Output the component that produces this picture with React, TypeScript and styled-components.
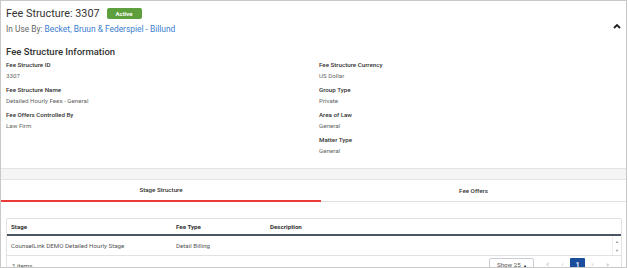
import React from 'react'
import styled, {createGlobalStyle} from 'styled-components'

const GlobalStyle = createGlobalStyle`
  html, body {
    margin: 0;
    padding: 0;
    background: #fff;
    font-family: Roboto, 'Liberation Sans', sans-serif;
    color: #333;
  }
`

const Panel = styled.div`
  box-sizing: border-box;
  width: 627px;
  height: 268px;
  border: 1px solid #c8c8c8;
  overflow: hidden;
`

const Header = styled.div`
  padding: 5px 5px 0 5px;
`

const TitleRow = styled.div`
  display: flex;
  align-items: center;
  gap: 7px;
  height: 15px;
`

const Title = styled.h1`
  margin: 0;
  font-size: 10.8px;
  font-weight: 400;
  color: #333;
`

const Badge = styled.span`
  display: inline-flex;
  align-items: center;
  justify-content: center;
  width: 35px;
  height: 11px;
  border-radius: 2px;
  background: #5c9f3c;
  color: #fff;
  font-size: 6px;
  font-weight: 700;
`

const InUseRow = styled.div`
  display: flex;
  align-items: center;
  justify-content: space-between;
  height: 15px;
  font-size: 8.4px;
  color: #666;
`

const Link = styled.a`
  color: #3b7dd0;
  text-decoration: none;
`

const Chevron = styled.svg`
  width: 8px;
  height: 6px;
  margin-right: 0;
  margin-top: -5px;
`

const SectionTitle = styled.h2`
  margin: 9px 0 0 0;
  font-size: 9.5px;
  font-weight: 500;
  color: #333;
  line-height: 14px;
`

const InfoGrid = styled.div`
  display: grid;
  grid-template-columns: 313px 1fr;
  margin-top: 1px;
  height: 108px;
`

const InfoColumn = styled.div`
  display: flex;
  flex-direction: column;
`

const Field = styled.div`
  display: flex;
  flex-direction: column;
  height: 25px;
`

const Label = styled.div`
  font-size: 6.2px;
  font-weight: 500;
  color: #333;
  line-height: 11px;
`

const Value = styled.div`
  font-size: 6.2px;
  color: #666;
  line-height: 11px;
`

const Band = styled.div`
  height: 10px;
  background: #f4f4f4;
  border-top: 1px solid #e4e4e4;
  border-bottom: 1px solid #e4e4e4;
`

const Tabs = styled.div`
  display: grid;
  grid-template-columns: 320px 1fr;
  height: 22px;
`

const Tab = styled.div<{$active?: boolean}>`
  display: flex;
  align-items: center;
  justify-content: center;
  font-size: 6.2px;
  font-weight: 500;
  color: #333;
  box-sizing: border-box;
  padding-top: ${p => (p.$active ? '0' : '1px')};
  border-bottom: ${p => (p.$active ? '2px solid #ec3a35' : '1px solid #dfe3e8')};
`

const TableWrap = styled.div`
  padding: 16px 4px 0 5px;
`

const Table = styled.div`
  border: 1px solid #e2e2e2;
  border-radius: 2px;
`

const Row = styled.div`
  display: grid;
  grid-template-columns: 165px 94px 1fr 9px;
  align-items: center;
`

const HeadRow = styled(Row)`
  height: 15px;
  border-bottom: 2px solid #4a5462;
`

const BodyRow = styled(Row)`
  height: 19px;
  border-bottom: 1px solid #e2e2e2;
`

const HeadCell = styled.div`
  padding-left: 4px;
  font-size: 6.2px;
  font-weight: 700;
  color: #333;
`

const Cell = styled.div`
  padding-left: 4px;
  font-size: 6.2px;
  color: #555;
`

const ScrollBar = styled.div`
  align-self: stretch;
  display: flex;
  flex-direction: column;
  justify-content: space-between;
  align-items: center;
  padding: 3px 0 2px;
  font-size: 4px;
  color: #999;
  border-left: 1px solid #eee;
`

const Footer = styled.div`
  display: flex;
  align-items: flex-start;
  height: 22px;
  padding: 2px 0 0 5px;
  font-size: 6.2px;
  color: #555;
`

const Count = styled.span`
  flex: 1;
  line-height: 16px;
`

const Select = styled.div`
  box-sizing: border-box;
  width: 45px;
  height: 14px;
  border: 1px solid #c9ced6;
  border-radius: 2px;
  display: flex;
  align-items: center;
  justify-content: space-between;
  padding: 0 6px 0 7px;
  font-size: 6.2px;
  color: #555;
  margin-right: 6px;
`

const Caret = styled.span`
  font-size: 4px;
  color: #333;
`

const Pager = styled.div`
  display: flex;
  align-items: center;
  margin-right: 6px;
`

const PageBtn = styled.span<{$current?: boolean}>`
  width: 15px;
  height: 14px;
  display: flex;
  align-items: center;
  justify-content: center;
  font-size: 6.5px;
  color: ${p => (p.$current ? '#fff' : '#bbb')};
  background: ${p => (p.$current ? '#1a4d9c' : 'transparent')};
  font-weight: ${p => (p.$current ? 700 : 400)};
  border-radius: 1px;
`

const fieldsLeft = [
    {label: 'Fee Structure ID', value: '3307'},
    {label: 'Fee Structure Name', value: 'Detailed Hourly Fees - General'},
    {label: 'Fee Offers Controlled By', value: 'Law Firm'}
]

const fieldsRight = [
    {label: 'Fee Structure Currency', value: 'US Dollar'},
    {label: 'Group Type', value: 'Private'},
    {label: 'Area of Law', value: 'General'},
    {label: 'Matter Type', value: 'General'}
]

const App = () => {
    return (
        <React.Fragment>
            <GlobalStyle/>
            <Panel>
                <Header>
                    <TitleRow>
                        <Title>Fee Structure: 3307</Title>
                        <Badge>Active</Badge>
                    </TitleRow>
                    <InUseRow>
                        <span>In Use By: <Link href="#">Becket, Bruun &amp; Federspiel - Billund</Link></span>
                        <Chevron viewBox="0 0 8 6">
                            <path d="M1 5 L4 2 L7 5" fill="none" stroke="#222" strokeWidth="1.8"/>
                        </Chevron>
                    </InUseRow>
                    <SectionTitle>Fee Structure Information</SectionTitle>
                    <InfoGrid>
                        <InfoColumn>
                            {fieldsLeft.map(f => (
                                <Field key={f.label}>
                                    <Label>{f.label}</Label>
                                    <Value>{f.value}</Value>
                                </Field>
                            ))}
                        </InfoColumn>
                        <InfoColumn>
                            {fieldsRight.map(f => (
                                <Field key={f.label}>
                                    <Label>{f.label}</Label>
                                    <Value>{f.value}</Value>
                                </Field>
                            ))}
                        </InfoColumn>
                    </InfoGrid>
                </Header>
                <Band/>
                <Tabs>
                    <Tab $active>Stage Structure</Tab>
                    <Tab>Fee Offers</Tab>
                </Tabs>
                <TableWrap>
                    <Table>
                        <HeadRow>
                            <HeadCell>Stage</HeadCell>
                            <HeadCell>Fee Type</HeadCell>
                            <HeadCell>Description</HeadCell>
                            <span/>
                        </HeadRow>
                        <BodyRow>
                            <Cell>CounselLink DEMO Detailed Hourly Stage</Cell>
                            <Cell>Detail Billing</Cell>
                            <Cell/>
                            <ScrollBar>
                                <span>▲</span>
                                <span>▼</span>
                            </ScrollBar>
                        </BodyRow>
                        <Footer>
                            <Count>1 items</Count>
                            <Select>
                                <span>Show 25</span>
                                <Caret>▲</Caret>
                            </Select>
                            <Pager>
                                <PageBtn>«</PageBtn>
                                <PageBtn>‹</PageBtn>
                                <PageBtn $current>1</PageBtn>
                                <PageBtn>›</PageBtn>
                                <PageBtn>»</PageBtn>
                            </Pager>
                        </Footer>
                    </Table>
                </TableWrap>
            </Panel>
        </React.Fragment>
    )
}

export default App
